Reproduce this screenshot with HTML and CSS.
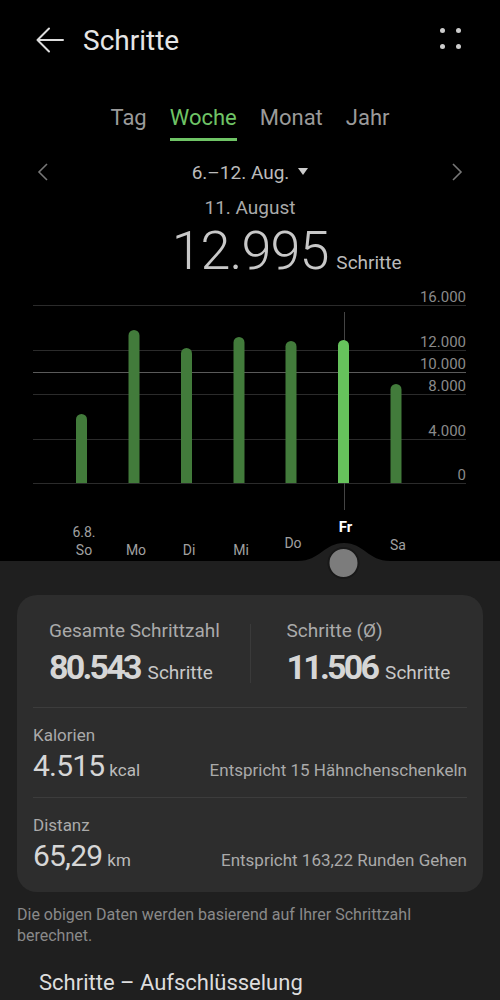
FILE: index.html
```html
<!DOCTYPE html>
<html lang="de">
  <head>
    <meta charset="utf-8" />
    <meta name="viewport" content="width=device-width, initial-scale=1" />
    <title>Schritte</title>
    <link rel="stylesheet" href="styles.css">
  </head>
  <body>
    <header class="topbar">
      <svg class="back" width="28" height="26" viewBox="0 0 28 26">
        <path d="M27 13 H1.5 M13 1.5 L1.5 13 L13 24.5" fill="none" stroke="#ddd" stroke-width="2" stroke-linecap="round" stroke-linejoin="round"/>
      </svg>
      <h1 class="title">Schritte</h1>
      <svg class="more" width="21" height="21" viewBox="0 0 21 21">
        <circle cx="2.5" cy="2.5" r="2.5" fill="#ccc"/>
        <circle cx="18.5" cy="2.5" r="2.5" fill="#ccc"/>
        <circle cx="2.5" cy="18.5" r="2.5" fill="#ccc"/>
        <circle cx="18.5" cy="18.5" r="2.5" fill="#ccc"/>
      </svg>
    </header>

    <nav class="tabs">
      <span class="tab">Tag</span>
      <span class="tab active">Woche</span>
      <span class="tab">Monat</span>
      <span class="tab">Jahr</span>
    </nav>

    <div class="range">
      <svg width="11" height="18" viewBox="0 0 11 18">
        <path d="M10 1 L2 9 L10 17" fill="none" stroke="#777" stroke-width="1.6"/>
      </svg>
      <div class="range-label">
        6.–12. Aug.
        <svg class="caret" width="10" height="7" viewBox="0 0 10 7"><path d="M0 0 H10 L5 7 Z" fill="#ccc"/></svg>
      </div>
      <svg width="11" height="18" viewBox="0 0 11 18">
        <path d="M1 1 L9 9 L1 17" fill="none" stroke="#777" stroke-width="1.6"/>
      </svg>
    </div>

    <div class="day">11. August</div>

    <div class="total">
      <span></span>
      <span class="total-num">12.995</span>
      <span class="total-unit">Schritte</span>
    </div>

    <!-- week chart, drawn in page coordinates -->
    <svg class="chart" width="500" height="295" viewBox="0 285 500 295">
      <g stroke="#2b2b2b" stroke-width="1">
        <line x1="33" x2="466" y1="305.5" y2="305.5"/>
        <line x1="33" x2="466" y1="350.5" y2="350.5"/>
        <line x1="33" x2="466" y1="394.5" y2="394.5"/>
        <line x1="33" x2="466" y1="439.5" y2="439.5"/>
        <line x1="33" x2="466" y1="483.5" y2="483.5"/>
      </g>
      <line x1="33" x2="466" y1="372.5" y2="372.5" stroke="#5a5a5a" stroke-width="1"/>

      <g class="axis" text-anchor="end">
        <text x="466" y="302">16.000</text>
        <text x="466" y="347">12.000</text>
        <text x="466" y="369">10.000</text>
        <text x="466" y="391">8.000</text>
        <text x="466" y="436">4.000</text>
        <text x="466" y="480">0</text>
      </g>

      <line x1="344.5" x2="344.5" y1="312" y2="510" stroke="#444" stroke-width="1"/>

      <g fill="#427b3b">
        <path d="M76 483 V419.5 A5.5 5.5 0 0 1 87 419.5 V483 Z"/>
        <path d="M128.5 483 V335.5 A5.5 5.5 0 0 1 139.5 335.5 V483 Z"/>
        <path d="M181 483 V353.5 A5.5 5.5 0 0 1 192 353.5 V483 Z"/>
        <path d="M233.5 483 V342.5 A5.5 5.5 0 0 1 244.5 342.5 V483 Z"/>
        <path d="M285.5 483 V346.5 A5.5 5.5 0 0 1 296.5 346.5 V483 Z"/>
        <path d="M390.5 483 V389.5 A5.5 5.5 0 0 1 401.5 389.5 V483 Z"/>
      </g>
      <path d="M338 483 V345.5 A5.5 5.5 0 0 1 349 345.5 V483 Z" fill="#66c25c"/>

      <g class="days" text-anchor="middle">
        <text x="84" y="537">6.8.</text>
        <text x="84" y="555">So</text>
        <text x="136" y="555">Mo</text>
        <text x="189" y="555">Di</text>
        <text x="241" y="555">Mi</text>
        <text x="293" y="548">Do</text>
        <text x="398" y="550">Sa</text>
      </g>
      <text class="day-active" x="345.5" y="532" text-anchor="middle">Fr</text>

      <path d="M0 561 H298 C320 561 324 543 344 543 C364 543 368 561 390 561 H500 V580 H0 Z" fill="#1f1f1f"/>
      <circle cx="343.5" cy="563" r="15" fill="#7c7c7c" stroke="#181818" stroke-width="2"/>
    </svg>

    <section class="panel">
      <div class="card">
        <div class="card-stats">
          <div class="stat">
            <div class="stat-label">Gesamte Schrittzahl</div>
            <div class="stat-value"><b>80.543</b><span>Schritte</span></div>
          </div>
          <div class="vdiv"></div>
          <div class="stat">
            <div class="stat-label">Schritte (Ø)</div>
            <div class="stat-value"><b>11.506</b><span>Schritte</span></div>
          </div>
        </div>

        <div class="metric">
          <div class="metric-label">Kalorien</div>
          <div class="metric-row">
            <div class="metric-value">4.515<span>kcal</span></div>
            <div class="metric-note">Entspricht 15 Hähnchenschenkeln</div>
          </div>
        </div>

        <div class="metric">
          <div class="metric-label">Distanz</div>
          <div class="metric-row">
            <div class="metric-value">65,29<span>km</span></div>
            <div class="metric-note">Entspricht 163,22 Runden Gehen</div>
          </div>
        </div>
      </div>

      <p class="note">Die obigen Daten werden basierend auf Ihrer Schrittzahl berechnet.</p>

      <h2 class="breakdown">Schritte – Aufschlüsselung</h2>
    </section>
  </body>
</html>
```

FILE: styles.css
```css
body {
  margin: 0;
  background: #000;
  color: #ddd;
  font-family: Roboto, "Noto Sans", sans-serif;
}

.topbar {
  height: 80px;
  display: flex;
  align-items: center;
  padding: 0 39px 0 36px;
}

.title {
  margin: 0 0 0 19px;
  font-size: 28px;
  font-weight: 400;
  color: #e6e6e6;
}

.more {
  margin-left: auto;
  margin-top: -3px;
}

.tabs {
  display: flex;
  justify-content: center;
  gap: 23px;
}

.tab {
  padding: 25px 0 7px;
  font-size: 22px;
  line-height: 26px;
  color: #9a9a9a;
  border-bottom: 3px solid transparent;
}

.tab.active {
  color: #6fc466;
  border-bottom-color: #6fc466;
}

.range {
  margin-top: 18px;
  height: 26px;
  display: flex;
  justify-content: space-between;
  align-items: center;
  padding: 0 37px;
}

.range-label {
  display: flex;
  align-items: center;
  font-size: 19px;
  color: #bbb;
}

.caret {
  margin-left: 9px;
  margin-top: -2px;
}

.day {
  margin-top: 12px;
  font-size: 19px;
  line-height: 22px;
  text-align: center;
  color: #aaa;
}

/* number is centered, unit hangs to the right */
.total {
  margin-top: 5px;
  display: grid;
  grid-template-columns: 1fr auto 1fr;
  align-items: baseline;
}

.total-num {
  font-size: 54px;
  line-height: 54px;
  font-weight: 300;
  letter-spacing: -1px;
  color: #c8c8c8;
}

.total-unit {
  margin-left: 8px;
  font-size: 19px;
  color: #bbb;
}

.chart {
  display: block;
  margin-top: 7px;
}

.axis text {
  font-size: 15px;
  fill: #8a8a8a;
}

.days text {
  font-size: 14px;
  fill: #a0a0a0;
}

.day-active {
  font-size: 15px;
  font-weight: 700;
  fill: #fff;
}

.panel {
  background: #1f1f1f;
  padding: 15px 0 40px;
}

.card {
  margin: 0 17px;
  padding: 0 16px;
  background: #2d2d2d;
  border-radius: 20px;
}

.card-stats {
  display: grid;
  grid-template-columns: minmax(0, 1fr) 1px minmax(0, 1fr);
  column-gap: 36px;
  padding: 25px 16px 15px;
  border-bottom: 1px solid #3c3c3c;
}

.stat-label {
  font-size: 19px;
  line-height: 22px;
  white-space: nowrap;
  color: #aaa;
}

.stat-value {
  margin-top: 7px;
  line-height: 36px;
  white-space: nowrap;
}

.stat-value b {
  font-size: 34px;
  letter-spacing: -2.8px;
  color: #d6d6d6;
}

.stat-value span {
  margin-left: 8px;
  font-size: 19px;
  color: #c8c8c8;
}

.vdiv {
  background: #3a3a3a;
  margin: 4px 0 9px;
}

.metric {
  padding: 17px 0 10px;
  border-bottom: 1px solid #3c3c3c;
}

.metric:last-child {
  border-bottom: none;
  padding-bottom: 15px;
}

.metric-label {
  font-size: 17px;
  line-height: 20px;
  color: #aaa;
}

.metric-row {
  margin-top: 4px;
  display: flex;
  justify-content: space-between;
  align-items: baseline;
}

.metric-value {
  font-size: 30px;
  line-height: 34px;
  letter-spacing: -0.8px;
  color: #d6d6d6;
}

.metric-value span {
  margin-left: 5px;
  font-size: 17px;
  letter-spacing: 0;
  color: #bbb;
}

.metric-note {
  font-size: 17px;
  color: #aaa;
}

.note {
  margin: 12px 17px 0;
  font-size: 16px;
  line-height: 21px;
  color: #8a8a8a;
}

.breakdown {
  margin: 23px 0 0 39px;
  font-size: 22px;
  line-height: 28px;
  font-weight: 400;
  color: #ddd;
}
```
